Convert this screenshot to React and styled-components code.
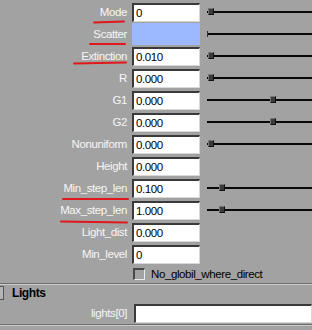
import React from "react";
import styled, { createGlobalStyle } from "styled-components";

const Global = createGlobalStyle`
  html, body {
    margin: 0;
    padding: 0;
    background: #a2a2a2;
    overflow: hidden;
  }
  body {
    font-family: "Liberation Sans", Arial, sans-serif;
    font-size: 11.5px;
    letter-spacing: -0.4px;
  }
`;

const Panel = styled.div`
  width: 312px;
  height: 330px;
  display: flex;
  flex-direction: column;
  padding-top: 1px;
  box-sizing: border-box;
  background: #a2a2a2;
`;

const Row = styled.div`
  display: flex;
  align-items: center;
  height: 22px;
`;

const Label = styled.div`
  position: relative;
  width: 128px;
  padding-right: 1px;
  box-sizing: border-box;
  text-align: right;
  color: #f6f6f6;
  line-height: 22px;
  white-space: nowrap;
  flex-shrink: 0;

  ${(p) =>
    p.$mark &&
    `
    &::after {
      content: "";
      position: absolute;
      left: ${p.$mark[0]}px;
      right: ${p.$mark[1]}px;
      top: ${p.$mark[2]}px;
      height: 2px;
      background: #e0181c;
      border-radius: 2px;
      transform: rotate(${p.$mark[3] || 0}deg);
    }
  `}
`;

const Field = styled.div`
  width: ${(p) => (p.$wide ? "auto" : "68px")};
  flex: ${(p) => (p.$wide ? "1" : "none")};
  height: 19px;
  margin-left: ${(p) => (p.$wide ? "6px" : "4px")};
  box-sizing: border-box;
  background: #ffffff;
  border-top: 2px solid #3a3a3a;
  border-left: 2px solid #3a3a3a;
  border-right: 1px solid #d8d8d8;
  border-bottom: 1px solid #d8d8d8;
  color: #000;
  padding-left: 2px;
  line-height: 16px;
  overflow: hidden;
`;

const Swatch = styled.div`
  width: 68px;
  height: 22px;
  margin-left: 4px;
  background: #9cb8ff;
  flex-shrink: 0;
`;

const Slider = styled.div`
  position: relative;
  flex: 1;
  height: 2px;
  margin-left: 7px;
  background: #080808;
`;

const Tick = styled.div`
  position: absolute;
  left: 0;
  top: -2px;
  width: 1px;
  height: 6px;
  background: #333;
`;

const Handle = styled.div`
  position: absolute;
  top: -3px;
  width: 6px;
  height: 7px;
  box-sizing: border-box;
  background: #3b3b3b;
  border: 1px solid #111;
  border-top-color: #777;
  border-left-color: #777;
`;

const CheckRow = styled.div`
  display: flex;
  align-items: center;
  height: 18px;
  padding-left: 133px;
  gap: 6px;
  color: #000;
`;

const Box = styled.div`
  width: 12px;
  height: 12px;
  box-sizing: border-box;
  background: #a2a2a2;
  border-top: 2px solid #474747;
  border-left: 2px solid #474747;
  border-right: 1px solid #eaeaea;
  border-bottom: 1px solid #eaeaea;
`;

const Divider = styled.div`
  height: 0;
  border-top: 1px solid #707070;
  border-bottom: 1px solid #c8c8c8;
`;

const Header = styled.div`
  display: flex;
  align-items: center;
  height: 16px;
  gap: 8px;
  font-weight: bold;
  font-size: 12px;
  color: #000;
`;

const Toggle = styled.div`
  width: 4px;
  height: 14px;
  box-sizing: border-box;
  border: 1px solid #555;
  border-left: none;
  background: #b4b4b4;
`;

const LightsRow = styled(Row)`
  margin-top: 1px;
  height: 22px;
`;

const params = [
  { label: "Mode", value: "0", handle: 1, mark: [93, 3, 20, -2] },
  { label: "Scatter", swatch: true, tick: true, mark: [89, 2, 20, 0] },
  { label: "Extinction", value: "0.010", handle: 1, mark: [73, 1, 17, -1] },
  { label: "R", value: "0.000", handle: 1 },
  { label: "G1", value: "0.000", handle: 63 },
  { label: "G2", value: "0.000", handle: 63 },
  { label: "Nonuniform", value: "0.000", handle: 1 },
  { label: "Height", value: "0.000" },
  { label: "Min_step_len", value: "0.100", handle: 12, mark: [62, -1, 21, 0] },
  { label: "Max_step_len", value: "1.000", handle: 12, mark: [60, 0, 22, 1] },
  { label: "Light_dist", value: "0.000" },
  { label: "Min_level", value: "0" },
];

const App = () => {
  return (
    <>
      <Global />
      <Panel>
        {params.map((p) => (
          <Row key={p.label}>
            <Label $mark={p.mark}>{p.label}</Label>
            {p.swatch ? <Swatch /> : <Field>{p.value}</Field>}
            {(p.handle || p.tick) && (
              <Slider>
                {p.tick && <Tick />}
                {p.handle && <Handle style={{ left: p.handle }} />}
              </Slider>
            )}
          </Row>
        ))}
        <CheckRow>
          <Box />
          <span>No_globil_where_direct</span>
        </CheckRow>
        <Divider />
        <Header>
          <Toggle />
          <span>Lights</span>
        </Header>
        <LightsRow>
          <Label>lights[0]</Label>
          <Field $wide />
        </LightsRow>
        <Divider />
      </Panel>
    </>
  );
};

export default App;
